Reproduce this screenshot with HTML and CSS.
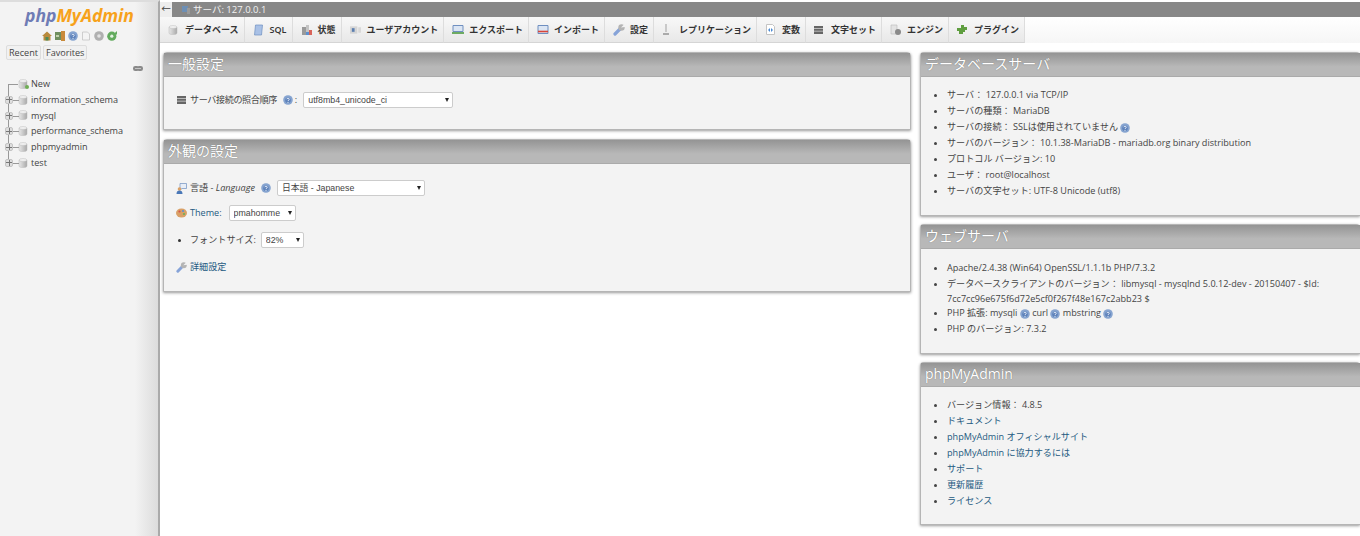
FILE: index.html
```html
<!DOCTYPE html>
<html lang="ja">
<head>
    <meta charset="UTF-8">
    <title>127.0.0.1 / phpMyAdmin</title>
    <link rel="stylesheet" href="styles.css">
</head>
<body>

<svg class="sprites" width="0" height="0">
    <defs>
        <linearGradient id="dbfill" x1="0" x2="1" y1="0" y2="0">
            <stop offset="0" stop-color="#e8e8e8"/>
            <stop offset="1" stop-color="#a9a9a9"/>
        </linearGradient>
        <symbol id="db" viewBox="0 0 10 10">
            <path d="M1 2v6c0 1 1.800 1.600 4 1.600S9 9 9 8V2z" fill="url(#dbfill)" stroke="#bbb" stroke-width=".5"/>
            <ellipse cx="5" cy="2" rx="4" ry="1.400" fill="#f2f2f2" stroke="#bbb" stroke-width=".5"/>
        </symbol>
        <symbol id="help" viewBox="0 0 10 10">
            <circle cx="5" cy="5" r="4.800" fill="#86a4d0"/>
            <circle cx="5" cy="5.300" r="2.800" fill="#5f83bb"/>
            <path d="M3.700 4.200C3.900 3 6.200 3 6.300 4.200 6.300 5.200 5 5 5 6" fill="none" stroke="#eef3fa" stroke-width=".9"/>
            <circle cx="5" cy="7.300" r=".6" fill="#eef3fa"/>
        </symbol>
        <symbol id="wrench" viewBox="0 0 12 12">
            <path d="M2 10 7 5" stroke="#86a3d8" stroke-width="3.200" stroke-linecap="round"/>
            <circle cx="8.500" cy="3.500" r="3.200" fill="#b4b4b4"/>
            <path d="M8 3.500 11 .5 12 0v3z" fill="#f3f3f3"/>
        </symbol>
    </defs>
</svg>

<aside class="sidebar">
    <div class="logo"><span class="logo-php">php</span><span class="logo-rest">MyAdmin</span></div>
    <div class="nav-icons">
        <svg viewBox="0 0 10 10" width="10" height="10"><path d="M5 .5 0 5h1.500v4.500h7V5H10z" fill="#b98a3c"/><path d="M3.500 6h3v3.500h-3z" fill="#4d8a55"/></svg>
        <svg viewBox="0 0 10 10" width="10" height="10"><path d="M0 1h6v8H0z" fill="#6f8f5e"/><path d="M6 0h4v10H6z" fill="#c98a3a"/><path d="M1 5h3" stroke="#dfe8c8" stroke-width="1.500"/></svg>
        <svg width="10" height="10"><use href="#help"/></svg>
        <svg viewBox="0 0 10 10" width="10" height="10"><path d="M1.500 1h5l2 2v6h-7z" fill="#f4f4f4" stroke="#c4c4c4" stroke-width=".8"/></svg>
        <svg viewBox="0 0 10 10" width="10" height="10"><circle cx="5" cy="5" r="4.800" fill="#b0b0b0"/><circle cx="5" cy="5" r="1.800" fill="#e2e2e2"/></svg>
        <svg viewBox="0 0 10 10" width="10" height="10"><circle cx="4.800" cy="5.200" r="4.600" fill="#63ab5e"/><circle cx="4.800" cy="5.200" r="1.600" fill="#e4f1e2"/><path d="M6 3.500h4V0z" fill="#63ab5e"/></svg>
    </div>
    <div class="recent-tabs">
        <span class="small-btn">Recent</span>
        <span class="small-btn">Favorites</span>
    </div>
    <div class="link-row">
        <svg viewBox="0 0 10 5" width="10" height="5"><rect x="0" y="0" width="6" height="5" rx="2.200" fill="#8a8a8a"/><rect x="4" y="0" width="6" height="5" rx="2.200" fill="#8a8a8a"/><path d="M2 2.500h6" stroke="#d5d5d5" stroke-width=".8"/></svg>
    </div>
    <ul class="tree">
        <li class="tree-new">
            <svg class="db-icon" width="10" height="10"><use href="#db"/></svg>
            <span class="new-dot"></span>
            <a href="#">New</a>
        </li>
        <li><span class="expander"></span><svg class="db-icon" width="10" height="10"><use href="#db"/></svg><a href="#">information_schema</a></li>
        <li><span class="expander"></span><svg class="db-icon" width="10" height="10"><use href="#db"/></svg><a href="#">mysql</a></li>
        <li><span class="expander"></span><svg class="db-icon" width="10" height="10"><use href="#db"/></svg><a href="#">performance_schema</a></li>
        <li><span class="expander"></span><svg class="db-icon" width="10" height="10"><use href="#db"/></svg><a href="#">phpmyadmin</a></li>
        <li><span class="expander"></span><svg class="db-icon" width="10" height="10"><use href="#db"/></svg><a href="#">test</a></li>
    </ul>
</aside>

<div class="main">
    <div class="server-bar">
        <span class="back">&#8592;</span>
        <svg viewBox="0 0 10 10" width="10" height="10"><path d="M1 1h6v6H1z" fill="#6d8fb5"/><path d="M6 3h3v6H6z" fill="#9a9a9a"/></svg>
        <span>サーバ: 127.0.0.1</span>
    </div>

    <nav class="tabs">
        <a class="tab" href="#"><svg width="10" height="10"><use href="#db"/></svg>データベース</a>
        <a class="tab" href="#"><svg viewBox="0 0 10 12" width="11" height="12"><path d="M2 1h7L8 11H1z" fill="#a9c1e6" stroke="#6f8fc0" stroke-width=".7"/></svg>SQL</a>
        <a class="tab" href="#"><svg viewBox="0 0 12 12" width="12" height="12"><path d="M1 3h4v8H1z" fill="#9a9a9a"/><path d="M5 1h3v10H5z" fill="#c4c4c4"/><path d="M8 6h3v5H8z" fill="#d9645a"/><path d="M5 8h3v3H5z" fill="#5c8fd0"/></svg>状態</a>
        <a class="tab" href="#"><svg viewBox="0 0 12 8" width="11" height="8"><path d="M0 0h8v8H0z" fill="#d5d5d5"/><path d="M2 2h3v4H2z" fill="#5c7fb0"/><path d="M9 1h3v6H9z" fill="#d9d9d9"/></svg>ユーザアカウント</a>
        <a class="tab" href="#"><svg viewBox="0 0 12 10" width="12" height="10"><path d="M1 .5h10v6H1z" fill="#dbe5f3" stroke="#6f8fc0"/><path d="M0 8h12" stroke="#4d9a3f" stroke-width="1.600"/></svg>エクスポート</a>
        <a class="tab" href="#"><svg viewBox="0 0 12 10" width="12" height="10"><path d="M1 .5h10v8H1z" fill="#dbe5f3" stroke="#6f8fc0"/><path d="M1 6.500h10" stroke="#d9453a" stroke-width="1.600"/></svg>インポート</a>
        <a class="tab" href="#"><svg width="12" height="12"><use href="#wrench"/></svg>設定</a>
        <a class="tab" href="#"><svg viewBox="0 0 8 12" width="8" height="12"><path d="M3 0h2v8H3z" fill="#c9c9c9"/><path d="M1 9h6v2H1z" fill="#aaa"/></svg>レプリケーション</a>
        <a class="tab" href="#"><svg viewBox="0 0 11 11" width="11" height="11"><path d="M1.500.5h6l2 2v8h-8z" fill="#fff" stroke="#c4c4c4"/><path d="M3 6l2-2v4zM8 6 6 4v4z" fill="#4a8ad4"/></svg>変数</a>
        <a class="tab" href="#"><svg viewBox="0 0 9 8" width="9" height="8"><path d="M0 0h9v8H0z" fill="#666"/><path d="M0 2.500h9M0 5.200h9" stroke="#ddd" stroke-width=".7"/></svg>文字セット</a>
        <a class="tab" href="#"><svg viewBox="0 0 12 12" width="12" height="12"><path d="M1 1h6v9H1z" fill="#e3e3e3" stroke="#bbb" stroke-width=".6"/><circle cx="8" cy="8" r="3" fill="#8a8a8a"/></svg>エンジン</a>
        <a class="tab" href="#"><svg viewBox="0 0 11 11" width="11" height="11"><path d="M4 1h3v2h3v3H8v2H6v2H2V7H0V4h4z" fill="#5f9e3f"/></svg>プラグイン</a>
    </nav>

    <div class="content">
        <div class="col-left">
            <section class="panel panel-general">
                <h2>一般設定</h2>
                <div class="panel-body">
                    <div class="form-row">
                        <svg viewBox="0 0 9 8" width="9" height="8"><path d="M0 0h9v8H0z" fill="#666"/><path d="M0 2.500h9M0 5.200h9" stroke="#ddd" stroke-width=".7"/></svg>
                        <span class="tight">サーバ接続の照合順序</span>
                        <svg class="help" width="10" height="10"><use href="#help"/></svg>
                        <span class="colon">:</span>
                        <span class="select sel-collation"><select><option>utf8mb4_unicode_ci</option></select></span>
                    </div>
                </div>
            </section>

            <section class="panel panel-look">
                <h2>外観の設定</h2>
                <div class="panel-body">
                    <div class="form-row row-lang">
                        <svg viewBox="0 0 11 11" width="11" height="11"><path d="M4 .5h6.500v5H6L4 7z" fill="#e8eef7" stroke="#6f8fc0" stroke-width=".7"/><circle cx="3.500" cy="6" r="1.800" fill="#d9a066"/><path d="M.5 11c0-2.500 1.200-3.500 3-3.500s3 1 3 3.500z" fill="#4a78b8"/></svg>
                        <span class="label-lang">言語 - <em>Language</em></span>
                        <svg class="help" width="10" height="10"><use href="#help"/></svg>
                        <span class="select sel-lang"><select><option>日本語 - Japanese</option></select></span>
                    </div>
                    <div class="form-row row-theme">
                        <svg viewBox="0 0 11 10" width="11" height="10"><ellipse cx="5.500" cy="5" rx="5.500" ry="4.500" fill="#d9a066"/><circle cx="3.500" cy="3.500" r="1.100" fill="#d9534a"/><circle cx="7" cy="3" r="1.100" fill="#5c8fd0"/><circle cx="8" cy="6" r="1.100" fill="#6fae55"/></svg>
                        <a class="theme-link" href="#">Theme:</a>
                        <span class="select sel-theme"><select><option>pmahomme</option></select></span>
                    </div>
                    <div class="form-row row-font">
                        <span class="bullet"></span>
                        <span>フォントサイズ:</span>
                        <span class="select sel-font"><select><option>82%</option></select></span>
                    </div>
                    <div class="form-row row-more">
                        <svg width="11" height="11"><use href="#wrench"/></svg>
                        <a href="#">詳細設定</a>
                    </div>
                </div>
            </section>
        </div>

        <div class="col-right">
            <section class="panel panel-db">
                <h2>データベースサーバ</h2>
                <ul class="info-list">
                    <li>サーバ： 127.0.0.1 via TCP/IP</li>
                    <li>サーバの種類： MariaDB</li>
                    <li>サーバの接続： SSLは使用されていません <svg class="help" width="10" height="10"><use href="#help"/></svg></li>
                    <li>サーバのバージョン： 10.1.38-MariaDB - mariadb.org binary distribution</li>
                    <li>プロトコル バージョン: 10</li>
                    <li>ユーザ： root@localhost</li>
                    <li>サーバの文字セット: UTF-8 Unicode (utf8)</li>
                </ul>
            </section>

            <section class="panel panel-web">
                <h2>ウェブサーバ</h2>
                <ul class="info-list">
                    <li>Apache/2.4.38 (Win64) OpenSSL/1.1.1b PHP/7.3.2</li>
                    <li class="wrapped">データベースクライアントのバージョン： libmysql - mysqlnd 5.0.12-dev - 20150407 - $Id:<br>7cc7cc96e675f6d72e5cf0f267f48e167c2abb23 $</li>
                    <li>PHP 拡張: mysqli <svg class="help" width="10" height="10"><use href="#help"/></svg> curl <svg class="help" width="10" height="10"><use href="#help"/></svg> mbstring <svg class="help" width="10" height="10"><use href="#help"/></svg></li>
                    <li>PHP のバージョン: 7.3.2</li>
                </ul>
            </section>

            <section class="panel panel-pma">
                <h2>phpMyAdmin</h2>
                <ul class="info-list">
                    <li>バージョン情報： 4.8.5</li>
                    <li><a href="#">ドキュメント</a></li>
                    <li><a href="#">phpMyAdmin オフィシャルサイト</a></li>
                    <li><a href="#">phpMyAdmin に協力するには</a></li>
                    <li><a href="#">サポート</a></li>
                    <li><a href="#">更新履歴</a></li>
                    <li><a href="#">ライセンス</a></li>
                </ul>
            </section>
        </div>
    </div>
</div>

</body>
</html>
```

FILE: styles.css
```css
* {
    box-sizing: border-box;
}

html, body {
    height: 100%;
}

body {
    margin: 0;
    display: flex;
    overflow: hidden;
    background-color: #fff;
    color: #444;
    font-family: "Open Sans", "Noto Sans CJK JP", sans-serif;
    font-size: 9.100px;
    line-height: 16px;
}

a {
    color: #235a81;
    text-decoration: none;
}

svg {
    flex: none;
    vertical-align: middle;
}

.sprites {
    position: absolute;
}

/* left navigation */
.sidebar {
    width: 160px;
    flex: none;
    border-top: 2px solid #ddd;
    border-right: 2px solid #aaa;
    background: linear-gradient(to right, #f3f3f3 0, #f3f3f3 135px, #dcdcdc 158px);
}

.logo {
    height: 27px;
    padding-left: 25px;
    font-size: 17.500px;
    line-height: 26px;
    font-weight: 700;
    font-style: italic;
}

.logo-php {
    color: #6f7cb5;
}

.logo-rest {
    color: #f7a21b;
}

.nav-icons {
    display: flex;
    gap: 3px;
    padding-left: 42px;
    height: 14px;
    align-items: center;
}

.recent-tabs {
    display: flex;
    gap: 2px;
    padding: 2px 0 0 6px;
}

.small-btn {
    height: 15px;
    padding: 0 2px;
    border: 1px solid #ddd;
    border-radius: 2px;
    background-color: #f1f1f1;
    line-height: 13px;
    color: #444;
}

.link-row {
    display: flex;
    justify-content: flex-end;
    padding: 6px 15px 0 0;
    height: 16px;
}

.tree {
    list-style: none;
    margin: 0;
    padding: 0;
}

.tree li {
    position: relative;
    display: flex;
    align-items: center;
    height: 15.800px;
    padding-left: 18px;
    gap: 3px;
}

.tree a {
    color: #444;
}

.tree li::before {
    content: "";
    position: absolute;
    left: 8px;
    top: -8px;
    width: 10px;
    height: 16px;
    border-left: 1px solid #999;
    border-bottom: 1px solid #999;
}

.tree li:first-child::before {
    top: 7px;
    height: 1px;
    border-left: 0;
}

.new-dot {
    position: absolute;
    left: 25px;
    top: 9px;
    width: 4px;
    height: 4px;
    border-radius: 50%;
    background-color: #6fae55;
}

.expander {
    position: absolute;
    z-index: 1;
    left: 5px;
    top: 4px;
    width: 8px;
    height: 8px;
    border: 1px solid #c4c4c4;
    border-radius: 2px;
    background:
        linear-gradient(#777, #777) center / 6px 1px no-repeat,
        linear-gradient(#777, #777) center / 1px 6px no-repeat,
        #dedede;
}

/* main area */
.main {
    flex: 1;
    min-width: 0;
    padding-top: 2px;
}

.server-bar {
    display: flex;
    align-items: center;
    gap: 2px;
    height: 15px;
    background-color: #888;
    color: #f2f2f2;
    font-size: 9.500px;
}

.back {
    width: 12px;
    height: 15px;
    margin-right: 7px;
    background-color: #eee;
    color: #444;
    text-align: center;
    line-height: 13px;
}

.tabs {
    display: flex;
    height: 26px;
    background: linear-gradient(#fff, #f6f6f6);
}

.tab {
    display: grid;
    grid-template-columns: 17px auto;
    align-items: center;
    padding: 0 5px 0 8px;
    border-right: 1px solid #ddd;
    border-bottom: 1px solid #d5d5d5;
    background: linear-gradient(#f8f8f8, #e8e8e8);
    color: #333;
    font-size: 9px;
    font-weight: 600;
    white-space: nowrap;
}

.content {
    display: flex;
    padding: 9px 0 0 3px;
    gap: 9px;
}

.col-left {
    width: 748px;
    flex: none;
}

.col-right {
    flex: 1;
    min-width: 0;
}

/* panels */
.panel {
    margin-bottom: 9px;
    border: 1px solid #b5b5b5;
    border-radius: 4px 4px 0 0;
    background-color: #f3f3f3;
    box-shadow: 0 1px 3px #999;
}

.col-right .panel {
    border-right: 0;
    margin-bottom: 8px;
}

.panel h2 {
    margin: 0;
    height: 24px;
    padding-left: 4px;
    border-bottom: 1px solid #aaa;
    background: linear-gradient(#949494, #b8b8b8 60%);
    color: #fff;
    font-size: 14px;
    font-weight: 400;
    line-height: 22px;
    text-shadow: 0 0 1px #666;
}

.panel-body {
    padding-left: 13px;
}

.panel-general {
    height: 78px;
}

.panel-general .form-row {
    margin-top: 15px;
}

.panel-look {
    height: 153px;
}

.panel-db {
    height: 164px;
}

.panel-web {
    height: 130px;
}

.panel-pma {
    height: 163px;
}

.form-row {
    display: flex;
    align-items: center;
    gap: 4px;
    height: 16px;
}

.form-row .help {
    margin-left: 2px;
}

.tight {
    letter-spacing: -.4px;
}

.colon {
    margin: 0 2px 0 -2px;
}

.row-lang {
    margin-top: 16px;
}

.row-theme {
    margin-top: 9px;
}

.row-font {
    margin-top: 11px;
}

.row-more {
    margin-top: 11px;
}

.row-lang > svg:first-child,
.row-theme > svg:first-child,
.row-more > svg:first-child {
    margin-left: -1px;
    margin-right: -1px;
}

.theme-link {
    margin-right: 3px;
}

.bullet {
    width: 3px;
    height: 3px;
    margin: 0 5px 0 1px;
    border-radius: 50%;
    background-color: #333;
}

.select {
    position: relative;
    display: block;
    height: 16px;
}

.select select {
    display: block;
    width: 100%;
    height: 100%;
    padding: 0 0 0 4px;
    border: 1px solid #ccc;
    border-radius: 2px;
    background-color: #fff;
    color: #444;
    font-family: "Liberation Sans", "Noto Sans CJK JP", sans-serif;
    font-size: 8.800px;
    appearance: none;
}

.select::after {
    content: "";
    position: absolute;
    right: 4px;
    top: 6px;
    border-top: 4px solid #222;
    border-left: 2.500px solid transparent;
    border-right: 2.500px solid transparent;
}

.sel-collation {
    width: 150px;
}

.sel-lang {
    width: 148px;
    margin-left: 2px;
}

.sel-theme {
    width: 67px;
}

.sel-font {
    width: 43px;
    margin-left: 1px;
}

.info-list {
    margin: 0;
    padding: 10px 0 0 26px;
}

.panel-web .info-list {
    padding-top: 11px;
}

.info-list li {
    line-height: 16px;
}

.info-list .wrapped {
    line-height: 15px;
    margin-bottom: -1px;
}

.info-list li::marker {
    font-size: 9px;
}
```
